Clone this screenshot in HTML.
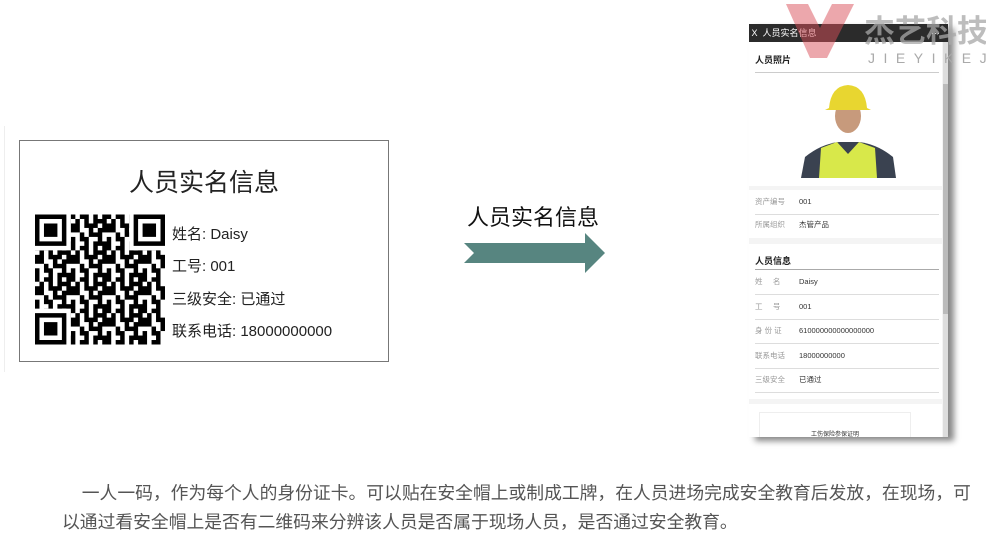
<!DOCTYPE html>
<html><head><meta charset="utf-8"><style>
body{margin:0;width:986px;height:546px;background:#fff;position:relative;overflow:hidden;font-family:"Liberation Sans","Noto Sans CJK SC",sans-serif}
.abs{position:absolute;white-space:nowrap}
.card{left:19px;top:140px;width:368px;height:220px;border:1px solid #777;background:#fff}
.ct{left:0;width:368px;top:22px;text-align:center;font-size:25px;color:#222}
.cl{left:152px;font-size:15px;color:#222}
.phone{left:749px;top:24px;width:199px;height:413px;background:#f4f4f4;box-shadow:6px 4px 6px #888;overflow:hidden}
.hd{left:0;top:0;width:199px;height:18px;background:#2b2b2b;color:#fff;font-size:9px;line-height:18px}
.row{left:6px;width:184px;height:24px;border-bottom:1px solid #ddd;font-size:7.5px;color:#999;line-height:24px}
.row b{font-weight:normal;color:#333;position:absolute;left:44px}
.bt{left:62px;font-size:17.8px;color:#555;line-height:29px}
</style></head><body>
<div class="abs" style="left:4px;top:126px;width:398px;height:246px;background:#fff;border-left:1px solid #eee"></div>
<div class="abs card">
<div class="abs ct">人员实名信息</div>
<svg class="abs" style="left:15px;top:72px" width="130" height="133" viewBox="0 0 29 29">
<defs><pattern id="q" width="8" height="7" patternUnits="userSpaceOnUse">
<rect x="0" y="0" width="1" height="1"/><rect x="2" y="0" width="2" height="1"/><rect x="5" y="0" width="1" height="2"/><rect x="7" y="0" width="1" height="1"/>
<rect x="1" y="1" width="1" height="2"/><rect x="3" y="1" width="1" height="1"/><rect x="6" y="1" width="2" height="1"/>
<rect x="0" y="2" width="1" height="1"/><rect x="3" y="2" width="3" height="1"/><rect x="7" y="2" width="1" height="2"/>
<rect x="0" y="3" width="2" height="1"/><rect x="4" y="3" width="1" height="2"/><rect x="6" y="3" width="1" height="1"/>
<rect x="2" y="4" width="1" height="1"/><rect x="5" y="4" width="2" height="1"/><rect x="0" y="5" width="1" height="2"/>
<rect x="2" y="5" width="2" height="1"/><rect x="6" y="5" width="1" height="1"/><rect x="3" y="6" width="1" height="1"/><rect x="5" y="6" width="3" height="1"/>
</pattern></defs>
<rect width="29" height="29" fill="url(#q)"/>
<g><rect x="0" y="0" width="8" height="8" fill="#fff"/><rect x="21" y="0" width="8" height="8" fill="#fff"/><rect x="0" y="21" width="8" height="8" fill="#fff"/>
<path d="M0 0h7v7h-7zM1 1v5h5v-5zM2 2h3v3h-3zM22 0h7v7h-7zM23 1v5h5v-5zM24 2h3v3h-3zM0 22h7v7h-7zM1 23v5h5v-5zM2 24h3v3h-3z" fill-rule="evenodd"/></g>
</svg>
<div class="abs cl" style="top:82px">姓名: Daisy</div>
<div class="abs cl" style="top:114px">工号: 001</div>
<div class="abs cl" style="top:147px">三级安全: 已通过</div>
<div class="abs cl" style="top:179px">联系电话: 18000000000</div>
</div>
<div class="abs" style="left:467px;top:200px;font-size:22px;color:#111">人员实名信息</div>
<svg class="abs" style="left:0;top:0" width="986" height="546"><polygon points="464,243 585,243 585,233 605,253 585,273 585,263 464,263 474,253" fill="#578580"/></svg>
<div class="abs phone">
<div class="abs hd">&nbsp;X&nbsp;&nbsp;人员实名信息<span style="position:absolute;right:8px">···</span></div>
<div class="abs" style="left:0;top:18px;width:193px;height:144px;background:#fff"></div>
<div class="abs" style="left:6px;top:29px;font-size:9px;font-weight:bold;color:#222">人员照片</div>
<div class="abs" style="left:6px;top:48px;width:184px;height:1px;background:#ccc"></div>
<svg class="abs" style="left:52px;top:58px" width="95" height="96">
<path d="M0 96 L4 75 Q20 62 38 60 L58 60 Q76 62 92 75 L95 96Z" fill="#3a4250"/>
<path d="M18 96 L20 66 L36 60 L47 72 L58 60 L74 66 L76 96Z" fill="#d8e84a"/>
<ellipse cx="47" cy="34" rx="13" ry="17" fill="#c79a7c"/>
<path d="M28 26 Q30 4 47 3 Q64 4 66 26 L70 28 L24 28Z" fill="#e8d630"/>
</svg>
<div class="abs" style="left:0;top:166px;width:193px;height:48px;background:#fff"></div>
<div class="abs row" style="top:166px">资产编号<b>001</b></div>
<div class="abs row" style="top:189px;border:none">所属组织<b>杰管产品</b></div>
<div class="abs" style="left:0;top:220px;width:193px;height:155px;background:#fff"></div>
<div class="abs" style="left:6px;top:230px;font-size:9px;font-weight:bold;color:#222">人员信息</div>
<div class="abs" style="left:6px;top:245px;width:184px;height:1px;background:#aaa"></div>
<div class="abs row" style="top:246px">姓&nbsp;&nbsp;&nbsp;&nbsp;&nbsp;名<b>Daisy</b></div>
<div class="abs row" style="top:271px">工&nbsp;&nbsp;&nbsp;&nbsp;&nbsp;号<b>001</b></div>
<div class="abs row" style="top:295px">身 份 证<b>610000000000000000</b></div>
<div class="abs row" style="top:320px">联系电话<b>18000000000</b></div>
<div class="abs row" style="top:344px">三级安全<b>已通过</b></div>
<div class="abs" style="left:0;top:380px;width:193px;height:40px;background:#fff"></div>
<div class="abs" style="left:10px;top:388px;width:150px;height:30px;border:1px solid #eee;font-size:6px;text-align:center;line-height:44px;color:#333">工伤保险参保证明</div>
<div class="abs" style="left:194px;top:18px;width:5px;height:395px;background:#ddd"></div>
<div class="abs" style="left:194px;top:60px;width:5px;height:230px;background:#bbb"></div>
</div>
<svg class="abs" style="left:780px;top:0" width="80" height="62"><path d="M6 4 L28 4 L40 28 L52 4 L74 4 L47 58 L30 58Z" fill="#d9505a" opacity=".5"/></svg>
<div class="abs" style="left:864px;top:6px;font-size:31px;font-weight:bold;color:#a8a8a8;opacity:.75">杰艺科技</div>
<div class="abs" style="left:868px;top:50px;font-size:14px;color:#aaa;letter-spacing:8.5px">JIEYIKEJI</div>
<div class="abs bt" style="top:479px">&nbsp;&nbsp;&nbsp;&nbsp;一人一码，作为每个人的身份证卡。可以贴在安全帽上或制成工牌，在人员进场完成安全教育后发放，在现场，可<br>以通过看安全帽上是否有二维码来分辨该人员是否属于现场人员，是否通过安全教育。</div>
</body></html>
